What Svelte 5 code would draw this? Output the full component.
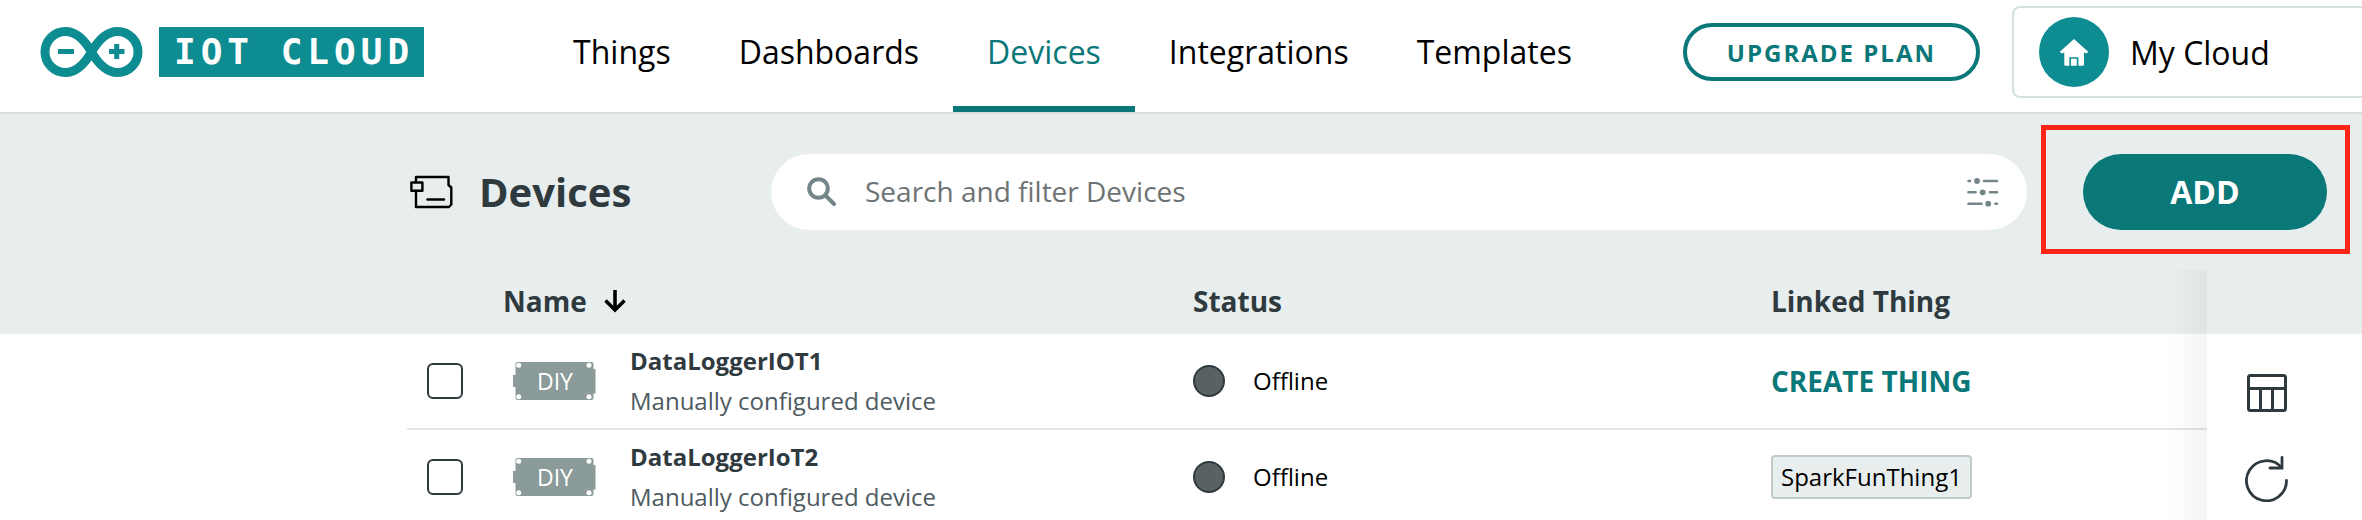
<script>
  const links = ['Things', 'Dashboards', 'Devices', 'Integrations', 'Templates'];
  const active = 'Devices';
  const devices = [
    { name: 'DataLoggerIOT1', kind: 'Manually configured device', status: 'Offline', thing: null },
    { name: 'DataLoggerIoT2', kind: 'Manually configured device', status: 'Offline', thing: 'SparkFunThing1' }
  ];
</script>

<div class="page">
  <header class="topbar">
    <a class="brand" href="#home">
      <svg width="103" height="50" viewBox="0 0 103 50" fill="none" stroke="#0d8c92" aria-hidden="true">
        <path stroke-width="9" d="M51.5 25C44 12 36 4.5 25.5 4.5a20.5 20.5 0 0 0 0 41C36 45.5 44 38 51.5 25S67 4.5 77.500 4.500a20.500 20.500 0 0 1 0 41C67 45.5 59 38 51.500 25z" />
        <path stroke-width="5" d="M18 24.500h16M69 24.500h15.500M76.700 17v15" />
      </svg>
      <span class="wordmark">IOT CLOUD</span>
    </a>
    <nav class="links">
      {#each links as link}
        <a href="#{link}" class:active={link === active}>{link}</a>
      {/each}
    </nav>
    <button class="upgrade" type="button">UPGRADE PLAN</button>
    <button class="space" type="button">
      <svg width="70" height="70" viewBox="0 0 70 70" aria-hidden="true">
        <circle cx="35" cy="35" r="35" fill="#0d8c92" />
        <path fill="#fff" d="M35 22 49.200 34.800 47.500 36.600 45 35.500V47.500q0 1.200-1.200 1.200H26.500q-1.200 0-1.200-1.200V35.500L22.500 36.600 20.800 34.800z" />
        <path fill="none" stroke="#0d8c92" stroke-width="1.600" d="M31.200 49v-8h7.400v8" />
      </svg>
      <span>My Cloud</span>
    </button>
  </header>

  <section class="toolbar">
    <div class="title">
      <svg width="43" height="34" viewBox="0 0 43 34" fill="none" stroke="#000" stroke-width="2.400" stroke-linejoin="round" stroke-linecap="round" aria-hidden="true">
        <path d="M6 7V2h32.500v8l2.800 2.500v17l-2.300 2.500H6V16" />
        <path d="M1.400 7.500h11v8.200h-11z" />
        <path d="M17.500 24.500H34" />
      </svg>
      <h1>Devices</h1>
    </div>
    <div class="search">
      <svg width="30" height="30" viewBox="0 0 30 30" fill="none" stroke="#75868a" stroke-width="4" stroke-linecap="round" aria-hidden="true">
        <circle cx="11.500" cy="11.500" r="9.300" />
        <path d="M18.500 18.500 27 27" />
      </svg>
      <input type="text" aria-label="Search and filter Devices" placeholder="Search and filter Devices" />
      <button type="button" aria-label="Filters">
        <svg width="32" height="29" viewBox="0 0 32 29" stroke="#75868a" stroke-width="2.600" stroke-linecap="round" fill="#75868a">
          <path d="M1.500 3H3M17 3h13M1.500 14.300h7M23 14.300h7M1.500 25.700h13M28.500 25.700H30" />
          <g stroke="none"><circle cx="10" cy="3" r="2.900" /><circle cx="15.700" cy="14.300" r="2.900" /><circle cx="21.200" cy="25.700" r="2.900" /></g>
        </svg>
      </button>
    </div>
    <div class="callout">
      <button class="add" type="button">ADD</button>
    </div>
  </section>

  <section class="list">
    <table>
      <colgroup>
        <col class="c-check" />
        <col class="c-board" />
        <col class="c-label" />
        <col class="c-status" />
        <col class="c-thing" />
      </colgroup>
      <thead>
        <tr>
          <th aria-label="Select"></th>
          <th colspan="2">
            <span class="sort">Name
              <svg width="24" height="24" viewBox="0 0 24 24" fill="none" stroke="#000" stroke-width="3.600" aria-hidden="true">
                <path d="M12 1v20M2.500 11.500 12 21l9.500-9.500" />
              </svg>
            </span>
          </th>
          <th>Status</th>
          <th>Linked Thing</th>
        </tr>
      </thead>
      <tbody>
        {#each devices as device}
          <tr>
            <td class="check"><input type="checkbox" aria-label={device.name} /></td>
            <td class="board">
              <svg width="83" height="38" viewBox="0 0 83 38" aria-hidden="true">
                <path fill="#8a9b9a" d="M4.500 0h74q2 0 2 2v5H82.500v24.500h-2V36q0 2-2 2h-74q-2 0-2-2V25H0V13h2.500V2q0-2 2-2z" />
                <g fill="#fff"><circle cx="5.700" cy="3.300" r="2.500" /><circle cx="76" cy="3.300" r="2.500" /><circle cx="5.700" cy="34.700" r="2.500" /><circle cx="76" cy="34.700" r="2.500" /></g>
                <text x="42" y="28" text-anchor="middle" fill="#fff" font-size="23">DIY</text>
              </svg>
            </td>
            <td class="label"><strong>{device.name}</strong><span>{device.kind}</span></td>
            <td><span class="state"><i></i>{device.status}</span></td>
            <td>
              {#if device.thing}
                <a class="chip" href="#{device.thing}">{device.thing}</a>
              {:else}
                <button class="create" type="button">CREATE THING</button>
              {/if}
            </td>
          </tr>
        {/each}
      </tbody>
    </table>
    <aside>
      <button type="button" aria-label="Columns">
        <svg width="40" height="38" viewBox="0 0 40 38" fill="none" stroke="#2f3a3f" stroke-width="3" aria-hidden="true">
          <rect x="1.500" y="1.500" width="37" height="35" rx="2" />
          <path d="M1.500 14.500h37M13.500 14.500v22M25.500 14.500v22" />
        </svg>
      </button>
      <button type="button" aria-label="Refresh">
        <svg width="44" height="46" viewBox="2 0 44 46" fill="none" stroke="#2f3a3f" stroke-width="2.800" stroke-linecap="round" aria-hidden="true">
          <path d="M43.500 24.500A20 20 0 1 1 38.500 11.500" />
          <path d="M39 1.500V12H27" />
        </svg>
      </button>
    </aside>
  </section>
</div>

<style>
  :global(body) { margin: 0; background: #fff; }
  .page {
    height: 100vh;
    overflow: hidden;
    font-family: "Open Sans", sans-serif;
    font-size: 24px;
    color: #000;
  }
  .page * { box-sizing: border-box; }
  svg { display: block; flex: none; }
  a { color: inherit; text-decoration: none; }
  button { font: inherit; color: inherit; background: none; border: 0; padding: 0; cursor: pointer; }

  .topbar {
    display: flex;
    align-items: center;
    height: 114px;
    padding-left: 40px;
    border-bottom: 2px solid #dee0e0;
  }
  .brand { display: flex; align-items: center; gap: 16px; height: 104px; align-self: flex-start; }
  .wordmark {
    padding: 0 10px 0 15px;
    background: #0d8c92;
    color: #fff;
    font: bold 36px/50px "DejaVu Sans Mono", monospace;
    letter-spacing: 5px;
    white-space: nowrap;
  }
  .links { display: flex; align-self: stretch; margin-left: 115px; }
  .links a {
    padding: 0 34px;
    font-size: 32px;
    line-height: 104px;
    border-bottom: 6px solid transparent;
  }
  .links a.active { color: #0a7778; border-color: #0a7778; }
  .upgrade {
    align-self: flex-start;
    height: 58px;
    margin: 23px 32px 0 auto;
    padding: 0 40px;
    border: 4px solid #0a7778;
    border-radius: 29px;
    color: #0a7778;
    font-weight: 700;
    letter-spacing: 2px;
    white-space: nowrap;
  }
  .space {
    display: flex;
    align-items: center;
    gap: 21px;
    align-self: flex-start;
    width: 350px;
    height: 92px;
    margin-top: 6px;
    padding-left: 25px;
    border: 2px solid #d3dfe0;
    border-right: 0;
    border-radius: 8px 0 0 8px;
    font-size: 32px;
  }

  .toolbar {
    display: flex;
    align-items: center;
    height: 156px;
    padding: 0 12px 0 410px;
    background: #e8eeee;
  }
  .title { display: flex; align-items: center; gap: 26px; width: 361px; }
  h1 { margin: 0; font-size: 40px; line-height: 56px; color: #2f3a3f; }
  .search {
    display: flex;
    align-items: center;
    flex: 1;
    height: 76px;
    padding: 0 28px 0 36px;
    border-radius: 38px;
    background: #fff;
  }
  .search input {
    flex: 1;
    min-width: 0;
    margin-left: 28px;
    padding: 0 0 2px;
    border: 0;
    outline: 0;
    background: none;
    font: 28px/40px "Open Sans", sans-serif;
  }
  .search input::placeholder { color: #6d7373; opacity: 1; }
  .callout { margin: 0 0 5px 14px; padding: 24px 18px 19px 37px; border: 5px solid #ff2314; }
  .add {
    display: block;
    width: 244px;
    height: 76px;
    padding-bottom: 2px;
    border-radius: 38px;
    background: #0a7778;
    color: #fff;
    font-size: 32px;
    font-weight: 700;
  }

  .list {
    display: flex;
    padding-left: 407px;
    background: linear-gradient(#e8eeee 64px, #fff 64px);
  }
  table { flex: 1; table-layout: fixed; border-collapse: separate; border-spacing: 0; }
  .c-check { width: 96px; }
  .c-board { width: 127px; }
  .c-label { width: 563px; }
  .c-status { width: 578px; }
  th, td { padding: 0; text-align: left; vertical-align: middle; }
  th { height: 64px; padding-bottom: 2px; font-size: 28px; line-height: 32px; color: #2f3a3f; }
  td { height: 96px; border-bottom: 2px solid #e3e5e5; }
  .sort { display: flex; align-items: center; gap: 16px; }
  .check { padding-left: 20px; }
  .check input {
    appearance: none;
    display: block;
    width: 36px;
    height: 36px;
    margin: 0;
    border: 2px solid #2f3a3f;
    border-radius: 6px;
  }
  .board { padding-left: 10px; }
  .label strong, .label span { display: block; line-height: 40px; }
  .label strong { color: #2f3a3f; }
  .label span { color: #4e5b61; }
  .state { display: flex; align-items: center; gap: 28px; line-height: 32px; }
  .state i { width: 32px; height: 32px; border: 2px solid #2f3a3f; border-radius: 50%; background: #5a6163; }
  .chip {
    display: inline-block;
    padding: 0 8px;
    border: 2px solid #bfcbcb;
    border-radius: 4px;
    background: #e8eeee;
    line-height: 40px;
    vertical-align: middle;
  }
  .create { display: block; font-size: 28px; font-weight: 700; color: #0a7778; }

  aside {
    position: relative;
    display: flex;
    flex-direction: column;
    gap: 44px;
    width: 155px;
    padding: 104px 0 0 38px;
  }
  aside button { display: flex; justify-content: center; width: 44px; }
  aside::before {
    content: "";
    position: absolute;
    top: 0;
    bottom: 0;
    right: 100%;
    width: 38px;
    background: linear-gradient(to right, transparent, rgba(0, 0, 0, 0.04));
  }
</style>
